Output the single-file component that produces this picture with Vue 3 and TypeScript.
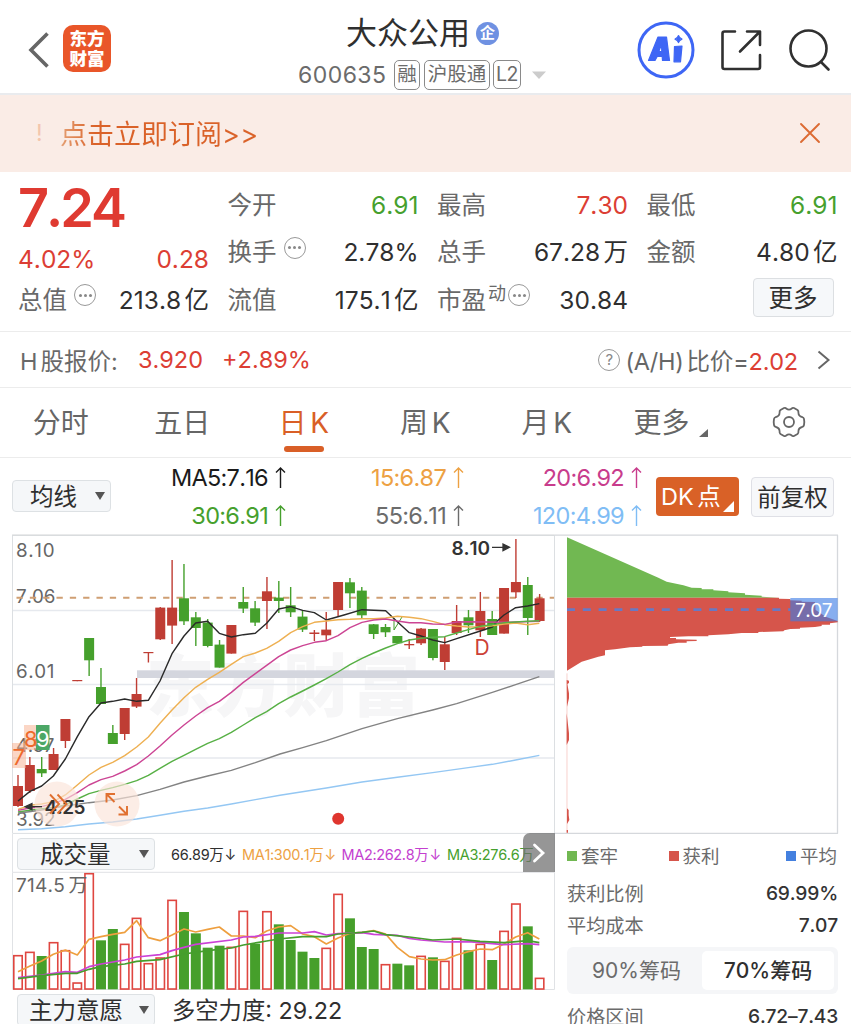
<script setup lang="ts">
type Tone = 'r' | 'g'
type Candle = [Tone, number, number, number, number]
type Row = { label: string; value: string; tone?: string; info?: boolean; sup?: string }

const columns: Row[][] = [
  [
    { label: '今开', value: '6.91', tone: 'green' },
    { label: '换手', value: '2.78%', info: true },
    { label: '流值', value: '175.1 亿' },
  ],
  [
    { label: '最高', value: '7.30', tone: 'red' },
    { label: '总手', value: '67.28 万' },
    { label: '市盈', value: '30.84', info: true, sup: '动' },
  ],
]
const tabs = ['分时', '五日', '日 K', '周 K', '月 K']
const averages = [
  { text: 'MA5:7.16', tone: 'black' },
  { text: '15:6.87', tone: 'orange' },
  { text: '20:6.92', tone: 'magenta' },
  { text: '30:6.91', tone: 'green' },
  { text: '55:6.11', tone: 'gray' },
  { text: '120:4.99', tone: 'blue' },
]

// tone, high, body top, body bottom, low
const candles: Candle[] = [
  ['r', 775, 786, 806, 807], ['r', 757, 765, 791, 793], ['g', 757, 769, 773.3, 777],
  ['r', 748, 754, 770, 770], ['r', 719, 719, 741, 748], ['r', 680, 680, 681.2, 681.2],
  ['g', 638, 638, 660.3, 676], ['g', 668, 687, 704, 704], ['g', 725, 733, 744, 744],
  ['r', 708, 708, 734, 740], ['r', 678, 694, 706.6, 708], ['r', 652, 652, 653.2, 662.5],
  ['r', 607, 607.6, 639.3, 640], ['r', 560, 607.6, 625.6, 644], ['g', 564, 598.3, 621.3, 625],
  ['g', 612, 617.3, 628, 646], ['g', 619, 622.6, 646, 647.3], ['g', 640, 644.6, 667.6, 667.6],
  ['r', 625, 625, 653.6, 653.6], ['g', 587, 602, 608.6, 613], ['g', 601, 608.3, 622.6, 626],
  ['r', 577, 591.3, 601, 629], ['g', 581, 597.6, 601, 613], ['g', 587, 605.3, 612.3, 617],
  ['g', 610, 616.6, 629.6, 632], ['r', 630, 632.5, 634, 641], ['r', 612, 629.6, 635.3, 641],
  ['r', 582, 582, 610, 616], ['g', 578, 582.3, 593.3, 608], ['g', 587, 590.6, 615.3, 618],
  ['g', 624, 624.3, 634, 639], ['g', 624, 627, 632.3, 637], ['g', 636, 636, 643.3, 644],
  ['r', 639, 644, 645.3, 649], ['r', 628, 628.6, 643.3, 645], ['g', 629, 629, 658, 660.3],
  ['r', 637, 644.3, 662, 670], ['r', 605, 621, 633, 635], ['g', 610, 617.3, 625.3, 633],
  ['r', 592, 611, 630.3, 637], ['g', 611, 619, 635, 635], ['r', 588, 588, 633.6, 633.6],
  ['r', 539, 582, 592.3, 598], ['g', 577, 585, 618, 635], ['r', 594, 598.3, 621, 622],
]
const volumes = [
  375, 365, 378, 336, 360, 457, 129, 331, 297, 341, 263, 399, 382, 209, 246, 310, 353, 347, 350, 242, 341, 243,
  283, 330, 365, 384, 353, 191, 265, 351, 357, 402, 401, 406, 377, 382, 392, 323, 361, 341, 390, 302, 220, 289, 443,
]
const volumeTones = 'rrgrrrrggrrrrrggggrrgrggggrrgggrggrgrrgrgrrgr'
const cx = (i: number): number => 18 + i * 11.855

const lines = [
  { c: '#2a2a2a', p: '54,813 90,784 125,768 160,738 196,687 232,620 267,560 303,519 338,514 374,507 410,514 445,511 480,453 516,371 552,318 587,279 623,274 658,310 694,321 730,314 766,310 800,280 836,237 872,230 908,241 943,248 979,270 1032,255 1086,239 1157,242 1192,275 1228,308 1263,318 1298,330 1334,338 1370,326 1441,303 1477,291 1495,270 1512,255 1547,233 1583,228 1618,221' },
  { c: '#eeb052', p: '54,838 89,826 125,822 160,815 196,795 232,765 267,735 303,712 338,697 374,677 410,651 445,621 480,580 516,540 552,503 587,472 623,448 658,427 694,403 730,380 766,369 800,355 836,334 872,308 908,290 943,277 979,273 1014,269 1050,268 1086,266 1121,266 1157,264 1192,259 1228,262 1263,266 1298,274 1334,284 1370,288 1405,291 1441,290 1477,287 1512,282 1547,279 1583,284 1618,280' },
  { c: '#cc4594', p: '54,841 89,834 125,830 160,820 196,808 232,788 267,765 303,749 338,739 374,723 410,704 445,678 480,648 516,615 552,585 587,558 623,533 658,514 694,487 730,457 766,431 800,406 836,380 872,360 908,347 943,337 979,332 1014,317 1050,293 1086,277 1121,270 1157,267 1192,273 1228,278 1263,278 1298,282 1334,283 1370,276 1405,275 1512,277 1618,274' },
  { c: '#57b045', p: '54,846 89,841 125,836 160,833 196,825 232,807 267,791 303,781 338,773 374,763 410,752 445,736 480,715 516,694 552,676 587,658 623,640 658,626 694,607 730,585 766,563 800,545 836,521 872,501 908,483 943,465 979,446 1014,426 1050,404 1086,385 1121,369 1157,354 1192,341 1228,330 1263,325 1298,322 1334,320 1370,309 1405,299 1441,289 1477,284 1512,278 1547,276 1583,274 1618,272' },
  { c: '#838383', p: '54,850 125,840 196,828 267,818 338,810 410,797 480,778 552,756 623,738 694,721 766,698 840,672 908,653 979,632 1086,596 1192,566 1298,540 1370,521 1477,487 1547,464 1618,440' },
  { c: '#94c7f3', p: '54,899 125,896 196,890 267,882 338,876 410,867 480,856 552,844 623,834 694,822 766,809 840,796 979,774 1086,756 1192,742 1298,728 1405,713 1477,703 1547,690 1618,676' },
]
const volumeLines = [
  { c: '#ee9f3f', p: '54,425 90,408 125,393 160,373 196,360 232,375 267,328 303,320 338,313 374,307 410,272 445,323 480,332 516,315 552,297 587,306 623,298 658,291 694,318 730,318 766,323 800,303 836,291 872,287 908,312 943,320 979,342 1014,324 1050,310 1086,307 1121,302 1157,312 1192,352 1228,380 1263,387 1298,390 1334,389 1370,375 1405,365 1441,357 1477,359 1512,342 1547,321 1583,308 1618,327' },
  { c: '#cb42d6', p: '54,443 125,435 196,425 232,427 267,410 303,402 374,390 410,381 480,374 516,362 552,352 587,343 694,330 730,321 766,319 836,309 908,309 943,305 979,315 1014,311 1086,308 1121,313 1192,316 1228,325 1263,330 1334,336 1405,335 1512,344 1583,341 1618,344' },
  { c: '#459e2d', p: '54,446 125,437 196,430 232,430 267,418 303,410 374,402 410,394 480,389 552,372 623,362 694,354 730,345 800,333 836,327 908,320 979,320 1014,312 1086,307 1121,303 1157,314 1228,321 1298,330 1370,327 1440,334 1512,338 1583,332 1618,338' },
]
const axis: [string, number][] = [['8.10', 556.6], ['7.06', 603.2], ['6.01', 677.6], ['4.97', 751.8], ['3.92', 826]]
</script>

<template>
  <main class="page">
    <header class="header">
      <div class="brand">
        <svg class="back" width="22" height="38" viewBox="0 0 22 38"><path d="M20.500 2.500 4 19 20.500 35.500" fill="none" stroke="#666" stroke-width="3.600" /></svg>
        <div class="logo"><span>东方</span><span>财富</span></div>
      </div>
      <div class="stock">
        <div class="name"><span>大众公用</span><b class="corp">企</b></div>
        <div class="code">
          <span class="num">600635</span><i class="tag t1">融</i><i class="tag t2">沪股通</i><i class="tag t3">L2</i>
          <svg width="14" height="8" viewBox="0 0 14 8"><path d="M0 .5h14L7 8z" fill="#ccc" /></svg>
        </div>
      </div>
      <div class="actions">
        <svg width="58" height="58" viewBox="0 0 58 58">
          <circle cx="29" cy="29" r="27" fill="none" stroke="#3e66f5" stroke-width="3" />
          <g fill="#3e66f5" stroke="#3e66f5" stroke-width="1.200" stroke-linejoin="round">
            <path fill-rule="evenodd" d="M21 16h8.500L32.500 39.500h-7l-.3-4h-5L18 39.500h-6.500zM24.500 23.500 21.800 30.500h3z" />
            <path d="m37.500 25.500 7.500-.5-1.500 15.800H37z" />
            <path d="M41.500 14.500c.7 2.300 1.300 2.900 3.500 3.600-2.200.7-2.800 1.300-3.500 3.600-.7-2.300-1.300-2.900-3.500-3.600 2.200-.7 2.800-1.300 3.500-3.600z" />
          </g>
        </svg>
        <svg width="42" height="42" viewBox="0 0 42 42" fill="none" stroke="#303030" stroke-width="2.600" stroke-linecap="round" stroke-linejoin="round">
          <path d="M15 2.500H4.500q-2 0-2 2V38q0 2 2 2H38q2 0 2-2V26M27 2.500h13V16M39 3.500 20 22.500" />
        </svg>
        <svg width="44" height="44" viewBox="0 0 44 44" fill="none" stroke="#303030" stroke-width="2.600" stroke-linecap="round">
          <circle cx="20.500" cy="20.500" r="18" /><path d="m33 34 7.500 7.500" />
        </svg>
      </div>
    </header>

    <section class="banner">
      <span class="bang">!</span><span class="subscribe">点击立即订阅<em>&gt;&gt;</em></span>
      <svg width="22" height="22" viewBox="0 0 22 22"><path d="m2 2 18 18M20 2 2 20" stroke="#dc6b33" stroke-width="1.900" stroke-linecap="round" /></svg>
    </section>

    <section class="quote">
      <div class="col lead">
        <strong>7.24</strong>
        <div class="cell change red"><span>4.02%</span><span>0.28</span></div>
        <div class="cell"><label>总值</label><i class="info" /><span class="val">213.8 亿</span></div>
      </div>
      <div v-for="(col, n) in columns" :key="n" class="col">
        <div v-for="row in col" :key="row.label" class="cell">
          <label>{{ row.label }}</label><sup v-if="row.sup">{{ row.sup }}</sup><i v-if="row.info" class="info" :class="{ near: row.sup }" />
          <span class="val" :class="row.tone">{{ row.value }}</span>
        </div>
      </div>
      <div class="col">
        <div class="cell"><label>最低</label><span class="val green">6.91</span></div>
        <div class="cell"><label>金额</label><span class="val">4.80 亿</span></div>
        <div class="cell"><button class="more">更多</button></div>
      </div>
    </section>

    <section class="hshare">
      <span class="hl">H 股报价:</span><span class="red hp">3.920</span><span class="red">+2.89%</span>
      <span class="ratio"><i class="help">?</i><span>(A/H) 比价=<span class="red">2.02</span></span>
        <svg width="13" height="20" viewBox="0 0 13 20"><path d="m1.500 1.500 10 8.500-10 8.500" fill="none" stroke="#666" stroke-width="2" /></svg>
      </span>
    </section>

    <nav class="tabs">
      <span v-for="(tab, i) in tabs" :key="tab" :class="{ active: i === 2 }">{{ tab }}</span>
      <span class="moretab">更多<svg width="9" height="8" viewBox="0 0 9 8"><path d="M9 0v8H0z" fill="#666" /></svg></span>
      <svg class="gear" width="34" height="34" viewBox="-17 -17 34 34" fill="none" stroke="#666" stroke-width="1.800" stroke-linejoin="round">
        <path d="M-5 -14Q-3.500 -14.500 -2.800 -13.500Q0 -11.200 2.800 -13.500Q3.500 -14.500 5 -14L8.500 -12Q9.700 -11 9.400 -9.500Q9.500 -5.700 13.200 -5Q14.700 -4.600 15 -3Q15.600 0 15 3Q14.700 4.600 13.200 5Q9.500 5.700 9.400 9.500Q9.700 11 8.500 12L5 14Q3.500 14.500 2.800 13.500Q0 11.200 -2.800 13.500Q-3.500 14.500 -5 14L-8.500 12Q-9.700 11 -9.400 9.500Q-9.500 5.700 -13.200 5Q-14.700 4.600 -15 3Q-15.600 0 -15 -3Q-14.700 -4.600 -13.200 -5Q-9.500 -5.700 -9.400 -9.500Q-9.700 -11 -8.500 -12Z" /><circle r="5" />
      </svg>
    </nav>

    <section class="toolbar">
      <div class="select avg"><span>均线</span><i /></div>
      <div class="mas">
        <span v-for="m in averages" :key="m.text" :class="m.tone">{{ m.text }}<svg width="11" height="21" viewBox="0 0 11 21"><path d="M5.500 1v20M1 5.500l4.500-4.500L10 5.500" fill="none" stroke="currentColor" stroke-width="1.400" /></svg></span>
      </div>
      <button class="dk">DK 点</button>
      <button class="adjust">前复权</button>
    </section>

    <div class="charts">
      <section class="left">
        <svg class="kline" width="543" height="299" viewBox="12 535 543 299">
          <g class="mark"><text x="146" y="711" textLength="274">东方财富</text></g>
          <path d="M12 610.500H554M12 684.500H554M12 758H554" stroke="#e6e9ee" stroke-width="1.300" />
          <path d="M12.500 833.400V535.300H554.500V833.400Z" fill="none" stroke="#dcdfe2" />
          <path d="M12 535.200H555" stroke="#d9dcde" stroke-width="1.600" />
          <rect x="137" y="670.300" width="417" height="7.700" fill="#d4d6de" />
          <g class="axis"><text v-for="[t, y] in axis" :key="t" x="16" :y="y" :textLength="t === '7.06' || t === '3.92' ? 39.500 : 38.500">{{ t }}</text></g>
          <path d="M12.500 597.800H554" stroke="#cf9f73" stroke-width="2" stroke-dasharray="6.300 7.030" stroke-dashoffset="-4" />
          <g v-for="(c, i) in candles" :key="i" :class="c[0]">
            <rect :x="cx(i) - 0.7" :y="c[1]" width="1.400" :height="c[4] - c[1]" />
            <rect :x="cx(i) - 5" :y="c[2]" width="10" :height="c[3] - c[2]" />
          </g>
          <path d="m402 617-8 13v-12" fill="none" stroke="#45a02c" />
          <g transform="translate(0 530) scale(.33333)" fill="none" stroke-width="4.300" stroke-linejoin="round">
            <polyline v-for="l in lines" :key="l.c" :points="l.p" :stroke="l.c" />
          </g>
          <g fill="#fae3d8" fill-opacity=".65"><circle cx="57" cy="804" r="22.500" /><circle cx="117" cy="804" r="22.500" /></g>
          <text class="extreme" x="44.500" y="814" textLength="41">4.25</text>
          <path d="M42 806.700H28M29 806.700h5M32 803.500v6.400l-7-3.200z" fill="#333" stroke="#333" stroke-width="1.200" />
          <g fill="none" stroke="#e07030" stroke-width="1.900">
            <path d="m50 794.500 9 9.500-9 9.500M57.500 794.500l9 9.500-9 9.500" />
            <path d="M106.500 802.500v-8.500h8.500M107 794.500l7.500 7.500M127 806v8.500h-8.500M126.500 814l-7.500-7.500" />
          </g>
          <rect x="12" y="743" width="14" height="25" fill="#f8ad8c" fill-opacity=".5" />
          <rect x="24" y="725" width="12.500" height="25" fill="#f8ad8c" fill-opacity=".5" />
          <rect x="36" y="725" width="13.500" height="25" fill="#4ca766" />
          <g class="digits"><text x="12.500" y="764.500">7</text><text x="24" y="746.500">8</text><text x="36" y="746.500" class="white">9</text></g>
          <text class="extreme" x="451.500" y="554.600" textLength="38.500">8.10</text>
          <path d="M492 547.300h12M503 544v6.600l6.500-3.300z" fill="#333" stroke="#333" stroke-width="1.300" />
          <text class="dpoint" x="474.500" y="654.500">D</text>
          <circle cx="338.200" cy="818.700" r="6" fill="#df352e" />
        </svg>
        <div class="volbar">
          <div class="select wide"><span>成交量</span><i /></div>
          <span class="v v0">66.89万<b>↓</b></span><span class="v orange v1">MA1:300.1万<b>↓</b></span><span class="v v2">MA2:262.8万<b>↓</b></span><span class="v v3">MA3:276.6万</span>
          <button class="next"><svg width="14" height="20" viewBox="0 0 14 20"><path d="m2.500 2 8.500 8-8.500 8" fill="none" stroke="#fff" stroke-width="2.800" stroke-linecap="round" /></svg></button>
        </div>
        <svg class="volume" width="543" height="118" viewBox="12 872 543 118">
          <path d="M12.500 989.500V872.300H554.500V989.500Z" fill="none" stroke="#e0e2e5" />
          <template v-for="(v, i) in volumes" :key="i">
            <rect v-if="volumeTones[i] === 'r'" :x="cx(i) - 4.2" :y="830.7 + v / 3" width="8.400" :height="(478 - v) / 3 - 1" fill="#fff" stroke="#df4640" stroke-width="1.600" />
            <rect v-else :x="cx(i) - 5" :y="830 + v / 3" width="10" :height="(478 - v) / 3" fill="#469f2b" />
          </template>
          <text class="vmax" x="16" y="892" textLength="71.500">714.5 万</text>
          <g transform="translate(0 830) scale(.33333)" fill="none" stroke-width="5" stroke-linejoin="round">
            <polyline v-for="l in volumeLines" :key="l.c" :points="l.p" :stroke="l.c" />
          </g>
        </svg>
        <div class="intent"><div class="select wide"><span>主力意愿</span><i /></div><span class="power">多空力度: 29.22</span></div>
      </section>

      <section class="right">
        <svg class="chips" width="284" height="299" viewBox="555 535 284 299">
          <path d="M555 535.200H838M837.500 535V833.500M555 833.300H838" fill="none" stroke="#d5d8dc" stroke-width="1.300" />
          <g transform="translate(555 530) scale(.33333)">
            <path d="M36 22 310 143 335 155 385 166 410 173 440 174V178L475 178V181L520 184V187L570 190V194L620 197V200L672 203H36z" fill="#71b852" />
            <path d="M36 203H672V206L706 207V211L740 212V215L780 216L782 240L800 252L812 260L848 273V277L825 280V284L800 284V288L780 291L735 293V296L706 297L688 301L685 304L610 306V309L560 309L520 313L460 316V319L400 319L345 321V324L363 324V328L425 329V333L395 334V338L370 338L340 343L338 347L262 348V350L225 352L180 358L150 361V376L130 380L110 386L80 395L58 409L36 422z" fill="#d6554b" />
            <path d="M36 430v478" stroke="#f4bbb5" stroke-width="2" />
            <path d="M35 450l7 2v7l-5 3 5 28v15l-6 25zM35 550l7 60v20l-7 15zM36 835l5 5v15l2 15-7 12zM35 900h4v8h-4z" fill="#d6554b" />
            <path d="M36 239H706" stroke="#6879c4" stroke-width="8" stroke-dasharray="24 23.400" />
            <rect x="706" y="204" width="142" height="70" fill="#3e7ce5" fill-opacity=".62" />
          </g>
          <text class="avgtext" x="795" y="617" textLength="37.500">7.07</text>
        </svg>
        <div class="panel">
          <div class="legend"><span><i class="lg" />套牢</span><span><i class="lr" />获利</span><span><i class="lb" />平均</span></div>
          <div class="stat"><span>获利比例</span><b>69.99%</b></div>
          <div class="stat"><span>平均成本</span><b>7.07</b></div>
          <div class="segment"><span>90%筹码</span><span class="on">70%筹码</span></div>
          <div class="stat"><span>价格区间</span><b>6.72–7.43</b></div>
        </div>
      </section>
    </div>
  </main>
</template>

<style>
body { margin: 0; background: #fff; }
</style>

<style scoped>
* { box-sizing: border-box; }
.page { width: 851px; height: 1024px; overflow: hidden; background: #fff; color: #2f2f2f; font-family: Inter, "Noto Sans CJK SC", sans-serif; font-weight: 400; white-space: nowrap; font-kerning: none; }
i, em { font-style: normal; }
svg { display: block; flex: none; overflow: visible; }
button { font: inherit; padding: 0; border: 0; color: inherit; }
.red { color: #dc3e34; } .green { color: #46a02d; } .orange { color: #eda143; } .magenta { color: #c83c8c; } .gray { color: #6c6c6c; } .blue { color: #80bdf5; } .black { color: #1b1b1b; }

.header { height: 95px; border-bottom: 2px solid #e9ebee; display: grid; grid-template-columns: 298px 1fr 216px; }
.brand { display: flex; padding: 25px 0 0 27px; gap: 14px; }
.back { margin-top: 6px; }
.logo { width: 48px; height: 47px; border-radius: 10px; background: #e95629; color: #fff; font: 900 17.500px/20px "Noto Sans CJK SC", sans-serif; display: flex; flex-direction: column; align-items: center; justify-content: center; padding-bottom: 1px; }
.stock { padding-top: 16px; }
.name { display: flex; align-items: center; height: 34px; margin-left: 48px; font-size: 31px; line-height: 34px; }
.corp { width: 23px; height: 23px; margin-left: 6px; border-radius: 50%; background: #6f91e2; color: #fff; font-size: 15px; line-height: 22px; text-align: center; }
.code { display: flex; align-items: center; height: 30px; margin-top: 10px; color: #6b6b6b; }
.num { font-size: 23px; letter-spacing: .45px; width: 96px; }
.tag { height: 30px; border: 1.500px solid #8a8a8a; border-radius: 5px; font-size: 19.500px; line-height: 27px; text-align: center; margin-right: 4px; }
.t1 { width: 26px; } .t2 { width: 66px; } .t3 { width: 28px; height: 29px; margin: 0 11px 1px -1px; letter-spacing: -.5px; }
.actions { display: flex; align-items: center; padding: 6px 0 0 2px; gap: 25px; }
.actions svg:last-child { margin-left: 1px; }

.banner { height: 77px; background: #faece6; color: #da6229; display: flex; align-items: center; padding: 0 30px 2px 36px; }
.banner svg { margin-left: auto; }
.bang { width: 24px; color: #f3c6ad; font-size: 23px; }
.subscribe { font-size: 27px; background: linear-gradient(90deg, #e4a074, #da6229 35px); background-clip: text; color: transparent; }
.subscribe em { letter-spacing: .4px; font-size: 27px; }

.quote { height: 160px; border-bottom: 1px solid #ececec; display: grid; grid-template-columns: repeat(4, 191px); column-gap: 18.500px; padding: 9px 0 0 18px; word-spacing: -3.500px; }
.col { display: grid; grid-template-rows: 47px 48px 47px; }
.cell { display: flex; align-items: center; font-size: 24.500px; line-height: 36px; }
label { color: #696969; }
.val { margin-left: auto; }
.lead strong { font-size: 54px; font-weight: 600; line-height: 54px; letter-spacing: -3px; color: #df3a31; }
.change { justify-content: space-between; padding-top: 14px; }
.info { position: relative; width: 22px; height: 22px; border: 1.800px solid #999; border-radius: 50%; margin: -9px 0 0 7px; display: grid; place-items: center; }
.info::after { content: ""; width: 3px; height: 3px; border-radius: 50%; background: #888; box-shadow: -5px 0 #888, 5px 0 #888; }
.info.near { margin-left: 2px; }
sup { font-size: 18px; line-height: 20px; color: #696969; margin: -12px 0 0 2px; vertical-align: baseline; }
.more { width: 81px; height: 39px; margin: -4px 4px 0 auto; background: #f6f8fa; border: 1px solid #dcdfe2; border-radius: 4px; font-size: 24.500px; line-height: 36px; }

.hshare { height: 56px; border-bottom: 1px solid #ececec; display: flex; align-items: center; padding: 0 21px 0 20px; font-size: 23.500px; word-spacing: -3.500px; }
.hl { width: 118px; color: #696969; } .hp { width: 84px; }
.ratio { margin-left: auto; display: flex; align-items: center; color: #666; }
.ratio > span { letter-spacing: -.2px; }
.ratio svg { margin-left: 19px; }
.help { width: 22px; height: 22px; border: 1.500px solid #999; border-radius: 50%; font-size: 15px; line-height: 19px; text-align: center; margin-right: 5px; color: #888; }

.tabs { height: 70px; border-bottom: 1px solid #ececec; display: grid; grid-template-columns: 121.500px 121.500px 121.500px 121.500px 121.500px 125px 1fr; align-items: center; color: #666; font-size: 28px; text-align: center; word-spacing: -4px; }
.tabs > span { position: relative; line-height: 68px; }
.active { color: #d95f27; }
.active::after { content: ""; position: absolute; left: 41px; top: 57px; width: 40px; height: 6px; border-radius: 3px; background: #d95f27; }
.moretab { display: flex; justify-content: center; align-items: center; padding-left: 1px; }
.moretab svg { margin: 21px 0 0 9px; }
.gear { margin-left: 39px; margin-top: -2px; }

.toolbar { height: 77px; display: flex; padding: 0 0 0 12px; }
.select { display: flex; align-items: center; background: #f5f7f9; border: 1.500px solid #dde1e4; border-radius: 4px; font-size: 23.500px; }
.select span { margin-top: -2px; }
.select i { border: 5px solid transparent; border-top: 8px solid #555; border-bottom: 0; margin-left: auto; margin-right: 5px; }
.avg { width: 99px; height: 32px; margin-top: 22px; padding-left: 17px; }
.mas { width: 532px; display: grid; grid-template-columns: 175px 178px 178px; grid-template-rows: 38px 38px; font-size: 23.500px; letter-spacing: -.7px; }
.mas span { display: flex; justify-content: flex-end; align-items: center; gap: 7px; }
.dk { position: relative; width: 83px; height: 39px; margin: 19px 0 0 13px; background: #d96127; color: #fff; border-radius: 4px; font-size: 23.500px; text-align: left; padding: 0 0 3px 5px; word-spacing: -3px; }
.dk::after { content: ""; position: absolute; right: 5px; bottom: 4px; border-left: 11px solid transparent; border-bottom: 11px solid #fff; }
.adjust { width: 83px; height: 40px; margin: 19px 0 0 12px; padding-bottom: 2px; background: #f7f8fa; border: 1px solid #dfe0e6; border-radius: 4px; font-size: 23.500px; }

.charts { display: flex; padding-left: 12px; height: 490px; }
.left { width: 543px; } .right { width: 284px; }
.kline text { font-family: Inter, "Noto Sans CJK SC", sans-serif; }
.r { fill: #bf3d34; } .g { fill: #45a02c; }
.axis { font-size: 18.800px; fill: #666; }
.mark { font-size: 68px; font-weight: 900; fill: #f6f6f7; }
.extreme { font-size: 19px; font-weight: 600; fill: #333; }
.digits { font-size: 22px; fill: #ee6a2c; } .digits .white { fill: #fff; }
.dpoint { font-size: 21px; fill: #cc4037; }
.volbar { position: relative; height: 38px; display: flex; align-items: center; padding: 2px 0 0 4px; border-left: 1px solid #e3e5e8; border-right: 1px solid #e3e5e8; }
.wide { width: 138px; height: 32px; padding-left: 22px; }
.v { font-size: 14.500px; letter-spacing: -.35px; margin-top: -2px; }
.v b { font-weight: 400; font-size: 14px; margin-left: 1px; }
.v0 { margin-left: 16px; width: 71px; } .v1 { width: 99.500px; } .v2 { width: 105.500px; color: #c43fd0; } .v3 { color: #46a02d; }
.next { position: absolute; right: -1px; top: -1px; width: 32px; height: 39px; background: rgb(110 110 110 / .72); border-radius: 7px 0 0 0; display: grid; place-items: center; }
.vmax { font-size: 19px; fill: #666; word-spacing: -2px; }
.intent { display: flex; align-items: center; padding: 4px 0 0 5px; }
.intent .wide { padding-left: 11px; }
.power { margin: -2px 0 0 17px; font-size: 23.300px; }
.avgtext { font-size: 19px; fill: #fff; }
.panel { width: 271px; margin-left: 12px; color: #6b6b6b; }
.legend { height: 43px; display: grid; grid-template-columns: 101.500px 1fr auto; align-items: center; font-size: 18.500px; }
.legend span { display: flex; align-items: center; line-height: 24px; }
.legend i { width: 10px; height: 10px; margin-right: 4px; }
.legend span:last-child { margin-right: 1px; }
.lg { background: #71b852; } .lr { background: #d6554b; } .lb { background: #4480df; }
.stat { height: 32px; display: flex; justify-content: space-between; align-items: center; font-size: 19.200px; }
.stat b { font-weight: 500; color: #333; letter-spacing: -.2px; }
.segment { height: 47px; margin: 6px 0 6px; padding: 4px; border-radius: 6px; background: #f5f6f8; display: grid; grid-template-columns: 131px 132px; align-items: center; text-align: center; font-size: 21px; line-height: 39px; }
.on { background: #fff; border-radius: 5px; color: #2f2f2f; font-weight: 500; }
</style>
